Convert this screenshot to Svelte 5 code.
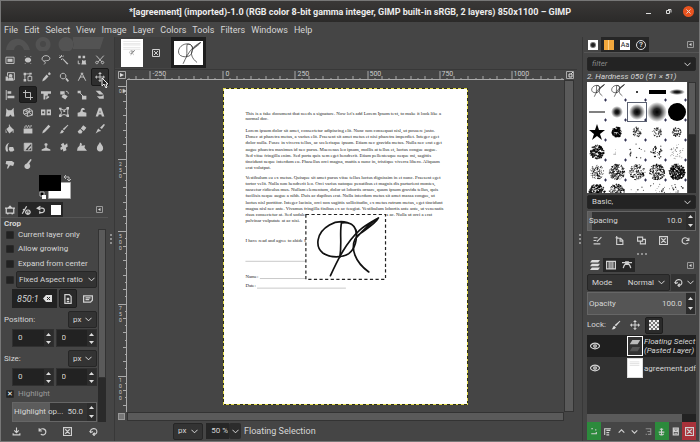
<script lang="ts">
  const title =
    "*[agreement] (imported)-1.0 (RGB color 8-bit gamma integer, GIMP built-in sRGB, 2 layers) 850x1100 – GIMP";
  const menus = ["File", "Edit", "Select", "View", "Image", "Layer", "Colors", "Tools", "Filters", "Windows", "Help"];

  // f = filled path, s = stroked path, on a 16x16 grid
  type Icon = { name: string; f?: string; s?: string };

  const tools: Icon[] = [
    { name: "Rectangle Select", f: "M4 6h8v5H4z", s: "M1.5 3.500h13v10h-13z" },
    { name: "Ellipse Select", f: "M8 4a5 4 0 1 0 .01 0z", s: "M3 3l1-1M12 2l1 1M3 13l1 1M12 14l1-1" },
    { name: "Free Select", s: "M6 10C-1 9 1 1 8 1s9 8 1 8c-3 0-5 1-3 2s0 3-1 4" },
    { name: "Fuzzy Select", f: "M6 5l9 9-2 1-8-9z", s: "M4 0v3M4 6v2M0 4h3M1 1l2 2M7 1L6 3" },
    { name: "Select by Color", f: "M2 1h4v4H2zM9 1h4v4H9zM8 8l3 1 3-1v4l1 3H7l1-3z", s: "M2 9v5h3" },
    { name: "Scissors Select", s: "M2 1l9 10M14 1L5 11M3 10a2 2 0 1 0 .1 0zM12 10a2 2 0 1 0 .1 0z" },
    { name: "Foreground Select", f: "M1 7h4v7H1zM9 3a3 3 0 1 1-.1 0zM5 14c0-4 1-6 4-6s5 2 5 6z", s: "M4 6V1h11v12" },
    { name: "Paths", f: "M1 1h4v4H1zM10 1h4v3h-4zM1 11h4v4H1z", s: "M3 5v6M5 3h5M8 7h6v7H8zM11 4v3" },
    { name: "Color Picker", f: "M11 3l2-3 3 3-3 2zM9 4l3 3-6 6-4 2 1-4z" },
    { name: "Zoom", f: "M10 11l2-2 4 5-2 2z", s: "M6.500 2a4.500 4.500 0 1 0 .1 0z" },
    { name: "Measure", s: "M8 2L2 14M8 2l6 12M4 10c2-3 6-3 8 0M6 2h4" },
    { name: "Move", f: "M8 0l3 3H5zM8 16l3-3H5zM0 8l3-3v6zM16 8l-3-3v6z", s: "M8 2v12M2 8h12" },
    { name: "Align", f: "M4 2h6v4H4zM4 9h11v4H4z", s: "M2 0v16" },
    { name: "Crop", s: "M4 0v12h12M0 4h12v12" },
    { name: "Unified Transform", f: "M0 2h16v4h-5v3H7v6H4V6H0zM9 10h4v2l-5 3z" },
    { name: "Rotate", f: "M2 2h7v5H2zM7 6l7 4-4 5-6-4z", s: "M11 2c3 0 4 2 4 4" },
    { name: "Scale", f: "M1 1h5v4H1zM8 9h7v6H8z", s: "M5 5l5 5" },
    { name: "Shear", f: "M1 1h7l6 6H7zM3 10h7l4-2v6H7z" },
    { name: "Handle Transform", f: "M2 2l3 3h5l4-4v6l1 8h-4l-2-3-3 3H1l1-7z" },
    { name: "3D Transform", s: "M1 5l9-3 5 4v7l-8 2-6-4zM1 5l6 3 8-2M7 8v7M4 4l5 3M10 2v7l-8 2M10 9l5 4" },
    { name: "Flip", f: "M0 4h7v9H0zM9 4h7v9H9zM2 7v3h3V7zM11 7v3h3V7z" },
    { name: "Cage Transform", f: "M0 1h4v3H0zM12 0h4v4h-4zM0 12h4v4H0zM12 12h4v4h-4zM7 5h3v3H7z", s: "M2 3l6 2 6-3v12l-6-2-6 2 2-5z" },
    { name: "Warp Transform", f: "M1 9c2 0 5-1 5-4 1-5 6-4 7-1L9 5c-1 3 3 3 6 4v6H1z" },
    { name: "Text", f: "M6 1h4l5 14h-4l-1-3H6l-1 3H1zM7 9h2L8 5z" },
    { name: "Bucket Fill", f: "M2 8l6-5 6 6-7 6zM1 8v6h2z", s: "M7 1v6M13 9v5" },
    { name: "Gradient", f: "M1 7h14v8H1zM2 4h2v2H2zM6 4h2v2H6zM10 4h2v2h-2zM4 2h2v2H4zM8 2h2v2H8zM12 2h2v2h-2z" },
    { name: "Pencil", f: "M12 1l3 3-9 9-4 2 1-4z" },
    { name: "Paintbrush", f: "M14 1l1 1-7 8-2-2zM5 9l3 3c-2 3-4 3-7 3 2-2 2-5 4-6z" },
    { name: "Eraser", f: "M10 2l5 4-4 5-5-4zM5 8l4 4-2 3H3l-2-3z" },
    { name: "Airbrush", f: "M14 0l2 1-5 7-3-2zM5 7l5 4-4 1-5 3z" },
    { name: "Ink", f: "M2 15C-1 9 1 3 7 1 3 5 4 10 5 15zM7 8h6l2 5-3 2H8l-2-3z" },
    { name: "MyPaint Brush", s: "M2 2h12v12H2z", f: "M2 2h12L8 8l-5 6zM8 11l5-5v3l-4 4z" },
    { name: "Clone", f: "M8 2a2 2 0 0 1 1 4v3l6 3v2H1v-2l6-3V6a2 2 0 0 1 1-4z" },
    { name: "Heal", f: "M3 4l4-3 2 4 4-3 1 5-3 2 1 4-5 2-1-4-3 2-1-4 3-2z" },
    { name: "Perspective Clone", f: "M5 1a3 3 0 0 1 2 5l6-1-1 4 4 5H0l1-5 3-3z" },
    { name: "Blur", f: "M8 0c2 4 5 6 5 10a5 5 0 0 1-10 0c0-4 3-6 5-10z" },
    { name: "Smudge", f: "M2 3h9l4 3-2 5-5-1-3 5H3l2-6-4-1z" },
    { name: "Dodge / Burn", f: "M6 7l1-1 5-6 2 1-4 6c5 7-3 12-7 7-2-3 0-6 3-7z" },
  ];

  const deviceTabs: Icon[] = [
    { name: "Tool Options", s: "M2 5h12v8H2zM0 5h2M14 5h2M5 5l3-3 3 3M4 15l1-2M12 15l-1-2" },
    { name: "Device Status", s: "M2 14L9 2M3 7l3 1M11 8a3.500 3.500 0 1 0 .1 0zM11 10v4" },
    { name: "Undo History", s: "M7 2L2 5l5 3M2 5h8c5 0 4 7 0 7H6M6 10v4" },
  ];

  const saveIcon = "M8 1v8M4 6l4 4 4-4M2 11v3h12v-3";
  const undoIcon = "M2 2v5h5M3 6c3-5 11-3 11 3 0 5-6 6-9 4";
  const resetIcon = "M14 3v5H9M13 7C11 1 2 2 2 9c0 5 8 7 11 3";
  const loopIcon = "M3 9C1 2 14 0 14 8c0 3-3 5-6 5M10 10l-3 3 3 3M1 7l2 3 4-2";
  const boxXIcon = "M1 1h14v14H1zM4 4l8 8M12 4l-8 8";
  const eyeIcon = "M0 8C4 2 12 2 16 8C12 14 4 14 0 8zM8 6a2 2 0 1 0 .1 0z";

  const brushActions: Icon[] = [
    { name: "Edit brush", s: "M1 3h7M1 8h5M1 14h12M15 2L7 10" },
    { name: "New brush", s: "M3 4h7l4 4v7H3zM9 4v5h5M1 3h5M3 0v6" },
    { name: "Duplicate brush", s: "M1 2h9v7H1zM10 6h5v8H6V9" },
    { name: "Delete brush", s: boxXIcon },
    { name: "Refresh brushes", s: resetIcon },
  ];

  const paragraphs = [
    {
      y: 67,
      step: 13,
      lines: [
        "This is a fake document that needs a signature. Now let's add Lorem Ipsum text, to make it look like a",
        "normal doc.",
      ],
    },
    {
      y: 110,
      step: 15.5,
      lines: [
        "Lorem ipsum dolor sit amet, consectetur adipiscing elit. Nunc non consequat nisl, ut posuere justo.",
        "Donec at pharetra metus, a varius elit. Praesent sit amet metus et nisi pharetra imperdiet. Integer eget",
        "dolor nulla. Fusce in viverra tellus, ac scelerisque ipsum. Etiam nec gravida metus. Nulla nec erat eget",
        "augue pharetra maximus id nec purus. Maecenas leo ipsum, mollis at tellus et, luctus congue augue.",
        "Sed vitae fringilla enim. Sed porta quis sem eget hendrerit. Etiam pellentesque neque mi, sagittis",
        "tincidunt neque interdum eu. Phasellus orci magna, mattis a nunc in, tristique viverra libero. Aliquam",
        "erat volutpat.",
      ],
    },
    {
      y: 227,
      step: 15.5,
      lines: [
        "Vestibulum eu ex metus. Quisque sit amet purus vitae tellus luctus dignissim in et nunc. Praesent eget",
        "tortor velit. Nulla non hendrerit leo. Orci varius natoque penatibus et magnis dis parturient montes,",
        "nascetur ridiculus mus. Nullam elementum, dolor ut lobortis ornare, quam ipsum gravida tellus, quis",
        "facilisis neque augue a nibh. Duis ac dapibus erat. Nulla interdum metus sit amet massa congue, ut",
        "luctus nisl porttitor. Integer lacinia, orci non sagittis sollicitudin, ex metus rutrum metus, eget tincidunt",
        "magna nisl nec ante. Vivamus fringilla finibus ex ac feugiat. Vestibulum lobortis ante ante, ut venenatis",
        "risus consectetur at. Sed sodale",
        "pulvinar vulputate at ac nisi.",
      ],
    },
  ];

  // the image is shown at 245px for 850 units, rulers are centred on it
  const SCALE = 245 / 850;
  const units = (from: number, to: number) => Array.from({ length: (to - from) / 25 + 1 }, (_, i) => from + i * 25);
  const hTicks = units(-325, 1175).map((u) => ({ u, at: Math.round((u - 425) * SCALE) }));
  const vTicks = units(0, 1100).map((u) => ({ u, at: Math.round((u - 550) * SCALE) }));
  const tickLength = (u: number) => (u % 250 === 0 ? 9 : u % 50 === 0 ? 4 : 2);

  function speckle(seed: number, count: number, radius: number, size: number) {
    let state = seed * 7919;
    const next = () => (state = (state * 16807) % 2147483647) / 2147483647;
    return Array.from({ length: count }, () => {
      const angle = next() * Math.PI * 2;
      const dist = Math.sqrt(next()) * radius;
      return { x: 10 + Math.cos(angle) * dist, y: 10 + Math.sin(angle) * dist, r: size * (0.5 + next() * 0.5) };
    });
  }

  const brushes = [
    { kind: "signature" },
    { kind: "signature" },
    { kind: "dot" },
    { kind: "block" },
    { kind: "ellipse" },
    { kind: "line" },
    { kind: "soft", r: 6 },
    { kind: "soft", r: 8, selected: true },
    { kind: "soft", r: 10 },
    { kind: "disc" },
    { kind: "star" },
    { kind: "speckle", dots: speckle(3, 110, 5, 1) },
    { kind: "speckle", dots: speckle(4, 60, 5, 0.7) },
    { kind: "speckle", dots: speckle(5, 50, 5, 0.7) },
    { kind: "speckle", dots: speckle(6, 100, 5, 0.6) },
    { kind: "speckle", dots: speckle(7, 130, 7, 1) },
    { kind: "speckle", dots: speckle(8, 4, 4, 0.6) },
    { kind: "speckle", dots: speckle(9, 12, 8, 0.9) },
    { kind: "speckle", dots: speckle(10, 34, 7, 0.9) },
    { kind: "speckle", dots: speckle(11, 36, 8, 0.5) },
    { kind: "speckle", dots: speckle(12, 100, 7, 0.7) },
    { kind: "speckle", dots: speckle(13, 200, 8, 0.7) },
    { kind: "speckle", dots: speckle(14, 150, 8, 0.7) },
    { kind: "speckle", dots: speckle(15, 200, 8, 0.7) },
    { kind: "speckle", dots: speckle(16, 260, 8, 0.9) },
    { kind: "speckle", dots: speckle(17, 190, 8, 0.9) },
    { kind: "speckle", dots: speckle(18, 190, 8, 0.7) },
    { kind: "speckle", dots: speckle(19, 16, 8, 0.6) },
    { kind: "speckle", dots: speckle(20, 34, 9, 0.7) },
    { kind: "speckle", dots: speckle(21, 34, 9, 0.7) },
  ] as any[];

  let activeTool = $state("Crop");
  let currentLayerOnly = $state(false);
  let allowGrowing = $state(false);
  let expandFromCenter = $state(false);
  let highlight = $state(true);
</script>

{#snippet icon(d: string, size = 10)}
  <svg class="icon" width={size} height={size} viewBox="0 0 16 16"><path {d} /></svg>
{/snippet}

{#snippet chevron()}
  <svg class="icon chev" width="7" height="7" viewBox="0 0 16 16"><path d="M1 4l7 7 7-7" /></svg>
{/snippet}

{#snippet arrows()}
  <span class="arrows">
    <button aria-label="Increase"><svg width="5" height="3" viewBox="0 0 5 3"><path d="M0 3L2.500 0 5 3z" /></svg></button>
    <button aria-label="Decrease"><svg width="5" height="3" viewBox="0 0 5 3"><path d="M0 0L2.500 3 5 0z" /></svg></button>
  </span>
{/snippet}

{#snippet signature()}
  <path d="M411 392C416 345 360 340 330 358C288 382 288 425 310 442C332 458 370 456 388 444C408 428 414 400 409 375C404 355 385 348 366 352C360 380 368 415 361 455" />
  <path d="M333 510C355 462 380 410 420 374C440 357 458 348 477 337C450 352 425 380 407 400C394 428 405 468 448 499M477 337C466 358 432 374 412 392" />
{/snippet}

{#snippet panelMenu()}
  <button class="panel-menu" aria-label="Configure this tab">
    <svg width="7" height="7" viewBox="0 0 7 7"><path d="M.5.5h6v6h-6z" fill="none" stroke="#999" /><path d="M2 3.500L4.500 2v3z" fill="#ddd" /></svg>
  </button>
{/snippet}

<div class="window">
  <header class="titlebar">
    <h1>{title}</h1>
    <div class="controls">
      <button aria-label="Minimize"><svg width="7" height="7" viewBox="0 0 7 7"><path d="M1 5.500h5" /></svg></button>
      <button aria-label="Restore"><svg width="7" height="7" viewBox="0 0 7 7"><path d="M1.500 2.500h3v3h-3zM3 1.500h3v3" /></svg></button>
      <button class="close" aria-label="Close"><svg width="7" height="7" viewBox="0 0 7 7"><path d="M1.500 1.500l4 4M5.500 1.500l-4 4" /></svg></button>
    </div>
  </header>

  <nav class="menubar">
    {#each menus as item}
      <button>{item}</button>
    {/each}
  </nav>

  <main>
    <aside class="left">
      <svg class="banner" viewBox="0 0 106 14" height="14">
        <path d="M5 13C7-2 25-2 29 13h-6c-2-7-9-6-10 0zM42 0a7.500 7.500 0 1 0 .1 0zM65 0a7.500 7.500 0 1 0 .1 0zM72 0h31l-4 12H72z" />
        <circle cx="42" cy="7" r="3" />
      </svg>
      <div class="tools">
        {#each tools as tool}
          <button
            class:active={activeTool === tool.name}
            class:hovered={tool.name === "Move"}
            aria-label={tool.name}
            onclick={() => (activeTool = tool.name)}
          >
            <svg width="10" height="10" viewBox="0 0 16 16">
              {#if tool.f}<path d={tool.f} fill="#c4c4c4" fill-rule="evenodd" />{/if}
              {#if tool.s}<path d={tool.s} fill="none" stroke="#c4c4c4" stroke-width="1.500" />{/if}
            </svg>
            {#if tool.name === "Move"}
              <svg class="cursor" width="8" height="12" viewBox="0 0 8 12">
                <path d="M1 1v8l2-2 2 4 1-1-1-3h2z" fill="#222" stroke="#eee" />
              </svg>
            {/if}
          </button>
        {/each}
      </div>
      <svg class="colors" width="34" height="26" viewBox="0 0 34 26">
        <path d="M9.500 8.500h22v16h-22z" fill="#fff" stroke="#aaa" />
        <path d="M0 1h22v16H0z" fill="#000" />
        <path d="M1 18h4v4H1z" fill="#000" stroke="#bbb" />
        <path d="M3 21h4v4H3z" fill="#fff" />
        <path d="M26 3h4v4M27 1l-2 2 2 2M28 5l2 2 2-2" fill="none" stroke="#bbb" />
      </svg>

      <div class="tabs">
        {#each deviceTabs as tab, i}
          <button class:current={i === 0} aria-label={tab.name}>{@render icon(tab.s ?? "")}</button>
        {/each}
        <button aria-label="Images"><span class="thumb-white"></span></button>
        {@render panelMenu()}
      </div>

      <section class="options">
        <h2>Crop</h2>
        <div class="scroller">
          <div class="form">
            <label class="check"><input type="checkbox" bind:checked={currentLayerOnly} />Current layer only</label>
            <label class="check"><input type="checkbox" bind:checked={allowGrowing} />Allow growing</label>
            <label class="check"><input type="checkbox" bind:checked={expandFromCenter} />Expand from center</label>
            <div class="fixed">
              <input type="checkbox" aria-label="Fixed" />
              <div class="select">
                <span>Fixed</span>
                <select aria-label="Fixed"><option>Aspect ratio</option></select>
                {@render chevron()}
              </div>
            </div>
            <div class="ratio">
              <div class="entry">
                <input type="text" value="850:1" aria-label="Ratio" />
                <svg width="9" height="7" viewBox="0 0 9 7"><path d="M3 0h6v7H3L0 3.500z" fill="#ddd" /><path d="M4 2l3 3M7 2L4 5" stroke="#222" /></svg>
              </div>
              <button class="pressed" aria-label="Portrait">{@render icon("M3 1h7l3 3v11H3zM6 7h4M6 9h4M6 12h4")}</button>
              <button aria-label="Landscape">{@render icon("M1 3h14v7l-3 3H1zM4 6h8M4 9h6")}</button>
            </div>
            {#each ["Position", "Size"] as group}
              <div class="unit-row">
                <label for={group}>{group}:</label>
                <div class="select">
                  <select id={group}><option>px</option></select>
                  {@render chevron()}
                </div>
              </div>
              <div class="pair">
                <div class="spin"><input type="text" value="0" aria-label="{group} X" />{@render arrows()}</div>
                <div class="spin"><input type="text" value="0" aria-label="{group} Y" />{@render arrows()}</div>
              </div>
            {/each}
            <label class="check faded"><input type="checkbox" bind:checked={highlight} />Highlight</label>
            <div class="scale half">
              <label for="opacity-hl">Highlight op...</label>
              <input id="opacity-hl" type="text" value="50.0" />
              {@render arrows()}
            </div>
          </div>
          <div class="vbar"><span></span></div>
        </div>
        <div class="actions">
          <button aria-label="Save preset">{@render icon(saveIcon, 9)}</button>
          <button aria-label="Restore preset">{@render icon(undoIcon, 9)}</button>
          <button aria-label="Delete preset">{@render icon(boxXIcon, 9)}</button>
          <button aria-label="Reset">{@render icon(loopIcon, 9)}</button>
        </div>
      </section>
    </aside>

    <div class="grip"><i></i><i></i><i></i></div>

    <section class="image">
      <div class="image-tabs">
        <div class="image-tab">
          <button class="page-thumb" aria-label="Agreement image">
            <svg width="22" height="28" viewBox="223 87 245 318">
              <path d="M246 115h195M246 140h195M246 155h195M246 185h195M246 205h195" stroke="#ddd" stroke-width="8" />
              <g transform="translate(220 105) scale(.33)" fill="none" stroke="#444" stroke-width="10">{@render signature()}</g>
            </svg>
          </button>
          <button class="tab-close" aria-label="Close tab">{@render icon("M1 1h14v14H1zM4 4l8 8M12 4l-8 8", 8)}</button>
        </div>
        <button class="image-tab other" aria-label="Signature image">
          <svg width="29" height="24" viewBox="258 325 239 195" preserveAspectRatio="none">
            <path d="M258 325h239v195H258z" fill="#fff" />
            <g fill="none" stroke="#333" stroke-width="6">{@render signature()}</g>
          </svg>
        </button>
      </div>

      <div class="view">
        <button class="corner" aria-label="Image menu">
          <svg width="8" height="8" viewBox="0 0 8 8"><path d="M.5.5h7v7h-7z" fill="none" stroke="#aaa" /><path d="M2 2l4 2-4 2z" fill="#ddd" /></svg>
        </button>
        <svg class="hruler">
          <svg x="50%" overflow="visible">
            {#each hTicks as { u, at }}
              <path d="M{at}.5 10v-{tickLength(u)}" />
              {#if u % 250 === 0}<text x={at + 2} y="6">{u}</text>{/if}
            {/each}
          </svg>
          <path class="edge" d="M0 9.500h2000" />
        </svg>
        <button class="corner" aria-label="Zoom with window">
          <svg width="8" height="8" viewBox="0 0 8 8"><path d="M.5.5h7v7h-7z" fill="none" stroke="#aaa" /><path d="M3 3h3v3H3zM5 3l2-2" fill="none" stroke="#ddd" /></svg>
        </button>

        <svg class="vruler">
          <svg y="50%" overflow="visible">
            {#each vTicks as { u, at }}
              <path d="M9 {at}.5h-{tickLength(u)}" />
              {#if u % 250 === 0}
                {#each String(u).split("") as digit, i}<text x="1" y={at + 6 + i * 6}>{digit}</text>{/each}
              {/if}
            {/each}
          </svg>
          <path class="edge" d="M8.500 0v2000" />
          <path d="M5 9l3 2-3 2z" fill="#eee" />
        </svg>
        <div class="canvas">
          <svg class="page" width="245" height="317" viewBox="0 0 612 792">
            <path d="M0 0h612v792H0z" fill="#fff" />
            {#each paragraphs as p}
              {#each p.lines as line, i}
                <text x="56" y={p.y + i * p.step}>{line}</text>
              {/each}
            {/each}
            <text x="408" y="320">s ac. Nulla ut orci a erat</text>
            <text x="56" y="384">I have read and agree to abide b</text>
            <path d="M56 433h151M92 476h115M85 500h222" stroke="#777" stroke-width="1" />
            <text x="56" y="475">Name:</text>
            <text x="56" y="498">Date:</text>
            <path d="M207 316h199v162H207z" fill="#fff" stroke="#222" stroke-width="3" stroke-dasharray="8 6" />
            <g transform="translate(-9 44) scale(.833)" fill="none" stroke="#111" stroke-width="5" stroke-linecap="round">
              {@render signature()}
            </g>
            <g fill="none" stroke-width="5" shape-rendering="crispEdges">
              <path d="M0 0h612v792H0z" stroke="#33330e" />
              <path d="M0 0h612v792H0z" stroke="#e2da4c" stroke-dasharray="7 7" />
            </g>
          </svg>
        </div>
        <div class="vscroll"></div>

        <div class="corner"><span class="quickmask"></span></div>
        <div class="hscroll"></div>
        <span></span>
      </div>

      <footer>
        <div class="select"><select aria-label="Unit"><option>px</option></select>{@render chevron()}</div>
        <div class="zoom"><input type="text" value="50 %" aria-label="Zoom" /><button aria-label="Zoom levels">{@render chevron()}</button></div>
        <span>Floating Selection</span>
      </footer>
    </section>

    <div class="grip"><i></i><i></i><i></i></div>

    <aside class="right">
      <div class="tabs">
        <button class="current" aria-label="Brushes">
          <svg width="10" height="10" viewBox="0 0 10 10"><path d="M0 0h10v10H0z" fill="#fff" /><circle cx="5" cy="5" r="3" fill="#777" /><circle cx="5" cy="5" r="2" fill="#222" /></svg>
        </button>
        <button aria-label="Patterns"><svg width="10" height="10" viewBox="0 0 10 10"><path d="M0 0h10v10H0z" fill="#f3a83c" /><path d="M4.500 0v10" stroke="#ffd287" /></svg></button>
        <button aria-label="Fonts"><span class="aa">Aa</span></button>
        <button aria-label="Document History"><span class="help">?</span></button>
        {@render panelMenu()}
      </div>

      <div class="brush-panel">
        <div class="select filter"><input type="text" placeholder="filter" aria-label="Filter" />{@render chevron()}</div>
        <h2>2. Hardness 050 (51 × 51)</h2>
        <div class="brush-area">
          <div class="brush-grid">
            {#each brushes as b}
              <button class:selected={b.selected} aria-label="Brush">
                <svg viewBox="0 0 20 20">
                  {#if b.kind === "signature"}
                    <g transform="translate(-16 -21) scale(.07)" fill="none" stroke="#222" stroke-width="9">{@render signature()}</g>
                  {:else if b.kind === "dot"}
                    <circle cx="10" cy="10" r="1" />
                  {:else if b.kind === "block"}
                    <path d="M2 8h17v4H2z" />
                  {:else if b.kind === "ellipse"}
                    <ellipse cx="10" cy="10" rx="8" ry="3" fill="url(#soft)" />
                  {:else if b.kind === "line"}
                    <path d="M2 9.500h16v1H2z" />
                  {:else if b.kind === "soft"}
                    <circle cx="10" cy="10" r={b.r} fill="url(#soft)" />
                  {:else if b.kind === "disc"}
                    <circle cx="10" cy="10" r="9" />
                  {:else if b.kind === "star"}
                    <path d="M10 2l2 6h6l-5 4 2 6-5-4-5 4 2-6-5-4h6z" />
                  {:else}
                    {#each b.dots as dot}
                      <circle cx={dot.x} cy={dot.y} r={dot.r} fill-opacity=".8" />
                    {/each}
                  {/if}
                  <path d="M17 18h3M18.500 16.500v3" stroke="#335" />
                </svg>
              </button>
            {/each}
          </div>
          <div class="vbar short"><span></span></div>
        </div>
        <div class="select tag"><select aria-label="Tag"><option>Basic,</option></select>{@render chevron()}</div>
        <div class="scale tenth">
          <label for="spacing">Spacing</label>
          <input id="spacing" type="text" value="10.0" />
          {@render arrows()}
        </div>
        <div class="actions">
          {#each brushActions as action}
            <button aria-label={action.name}>{@render icon(action.s ?? "", 9)}</button>
          {/each}
        </div>
      </div>

      <div class="grip row"><i></i><i></i><i></i></div>

      <div class="tabs layer-tabs">
        <button class="current" aria-label="Layers">
          <svg width="10" height="10" viewBox="0 0 16 16"><path d="M3 0h13l-3 4H0zM3 6h13l-3 4H0zM3 12h13l-3 4H0z" fill="#ddd" /></svg>
        </button>
        <button aria-label="Channels">{@render icon("M1 2h14v12H1zM5 3v10M8 3v10M11 3v10")}</button>
        <button aria-label="Paths">{@render icon("M0 4h16M8 5C4 6 3 9 2 13M8 5c4 1 5 4 6 8M6 3h4v4H6z")}</button>
        {@render panelMenu()}
      </div>

      <div class="layer-panel">
        <div class="mode">
          <div class="select">
            <label for="mode">Mode</label>
            <select id="mode"><option>Normal</option></select>
            {@render chevron()}
          </div>
          <button aria-label="Switch mode group">{@render icon(loopIcon, 9)}{@render chevron()}</button>
        </div>
        <div class="scale full">
          <label for="opacity">Opacity</label>
          <input id="opacity" type="text" value="100.0" />
          {@render arrows()}
        </div>
        <div class="lock">
          <span>Lock:</span>
          <button aria-label="Lock pixels"><svg width="10" height="10" viewBox="0 0 16 16"><path d={tools[27].f} fill="#ddd" /></svg></button>
          <button aria-label="Lock position"><svg width="10" height="10" viewBox="0 0 16 16"><path d={tools[11].f} fill="#ddd" /><path d={tools[11].s} stroke="#ddd" stroke-width="1.500" /></svg></button>
          <button class="pressed" aria-label="Lock alpha">
            <svg width="10" height="10" viewBox="0 0 10 10"><path d="M0 0h10v10H0z" fill="#777" /><path d="M0 0h2v2H0zM4 0h2v2H4zM8 0h2v2H8zM2 2h2v2H2zM6 2h2v2H6zM0 4h2v2H0zM4 4h2v2H4zM8 4h2v2H8zM2 6h2v2H2zM6 6h2v2H6zM0 8h2v2H0zM4 8h2v2H4zM8 8h2v2H8z" fill="#eee" /></svg>
          </button>
        </div>
        <div class="layers">
          <div class="layer current">
            {@render icon(eyeIcon, 10)}
            <svg class="layer-thumb dark" width="16" height="20" viewBox="0 0 16 20"><path d="M5 3h9l-3 5H2z" fill="#bbb" /><path d="M5 11h9l-3 5H2z" fill="#555" /></svg>
            <em>Floating Select<br />(Pasted Layer)</em>
          </div>
          <div class="layer">
            {@render icon(eyeIcon, 10)}
            <svg class="layer-thumb" width="16" height="20" viewBox="0 0 16 20"><path d="M2 3h11M2 5h11M2 7h11" stroke="#ddd" /></svg>
            <span>agreement.pdf</span>
          </div>
        </div>
        <div class="hbar"><span></span></div>
        <div class="layer-actions">
          <button class="green" aria-label="New layer">{@render icon("M4 3h3M4 12h9v-3M11 5h2", 9)}</button>
          <button aria-label="New group">{@render icon("M2 3h12M3 3v11M6 6h7M6 10h5M6 14h5", 9)}</button>
          <button aria-label="Raise">{@render icon("M3 10l5-5 5 5", 9)}</button>
          <button aria-label="Lower">{@render icon("M3 6l5 5 5-5", 9)}</button>
          <button class="dim" aria-label="Duplicate">{@render icon("M3 3h9v10H7M6 8h6M3 13h2", 9)}</button>
          <button class="green" aria-label="Anchor">{@render icon("M8 2v12M5 4h6M3 9h10M4 12c2 3 6 3 8 0", 9)}</button>
          <button aria-label="Add mask">{@render icon("M4 2h9v12H4zM6 5h5v3H6zM6 11h5", 9)}</button>
          <button class="red" aria-label="Delete layer">{@render icon(boxXIcon, 9)}</button>
        </div>
      </div>
    </aside>
  </main>

  <svg width="0" height="0" class="defs">
    <defs>
      <radialGradient id="soft">
        <stop offset="0" />
        <stop offset=".35" stop-opacity=".85" />
        <stop offset="1" stop-opacity="0" />
      </radialGradient>
    </defs>
  </svg>
</div>

<style>
  :global(body) {
    background: #454545;
  }
  .window {
    display: flex;
    flex-direction: column;
    min-height: 100vh;
    box-sizing: border-box;
    border: 1px solid #777;
    border-bottom-width: 2px;
    background: #454545;
    color: #d6d6d6;
    font: 8px/12px Roboto, "Noto Sans", sans-serif;
    overflow: hidden;
  }
  .window :global(*) {
    box-sizing: border-box;
  }
  svg {
    display: block;
    flex: none;
  }
  .defs {
    position: absolute;
  }
  button,
  input,
  select {
    font: inherit;
    color: inherit;
    background: none;
    border: 0;
    padding: 0;
    margin: 0;
    min-width: 0;
    border-radius: 0;
    outline: none;
  }
  button {
    display: flex;
    align-items: center;
    justify-content: center;
  }
  select {
    appearance: none;
    flex: 1;
  }
  h1,
  h2 {
    margin: 0;
    font-size: 8px;
  }
  .icon {
    fill: none;
    stroke: #d0d0d0;
    stroke-width: 2;
  }
  .chev {
    stroke: #eee;
    pointer-events: none;
  }

  .titlebar {
    display: flex;
    align-items: center;
    height: 21px;
    padding: 0 5px 0 128px;
    background: linear-gradient(#3a3837, #2b2a29);
  }
  h1 {
    flex: 1;
    font-size: 9px;
    color: #ececec;
    white-space: nowrap;
  }
  .controls {
    display: flex;
    gap: 9px;
  }
  .controls button {
    width: 11px;
    height: 11px;
    border-radius: 50%;
  }
  .controls path {
    fill: none;
    stroke: #ddd;
  }
  .controls .close {
    background: #e95420;
  }
  .menubar {
    display: flex;
    gap: 6px;
    height: 15px;
    padding: 0 3px;
    font-size: 9px;
  }
  main {
    flex: 1;
    display: grid;
    grid-template-columns: 107px 7px 1fr 6px 116px;
  }

  .left,
  .right,
  .image {
    display: flex;
    flex-direction: column;
    min-width: 0;
  }
  .banner {
    width: 106px;
    fill: #535353;
  }
  .banner circle {
    fill: #484848;
  }
  .tools {
    display: grid;
    grid-template-columns: repeat(6, 18px);
    grid-template-rows: repeat(7, 1fr);
    height: 122px;
  }
  .tools button {
    position: relative;
    border-radius: 2px;
  }
  .tools .active,
  .tools .hovered {
    background: #222;
    border: 1px solid #1a1a1a;
  }
  .tools .hovered {
    background: #2e2e2e;
  }
  .cursor {
    position: absolute;
    left: 9px;
    top: 8px;
    z-index: 1;
  }
  .colors {
    margin: 1px 0 2px 38px;
  }

  .tabs {
    display: flex;
    height: 15px;
  }
  .tabs button {
    width: 16px;
    background: #262626;
  }
  .left .tabs button {
    width: 15px;
  }
  .tabs .current,
  .left .tabs .current {
    width: 17px;
    background: #454545;
  }
  .tabs :global(.panel-menu),
  .left .tabs :global(.panel-menu) {
    width: 12px;
    margin-left: auto;
    background: none;
  }
  .thumb-white {
    width: 10px;
    height: 10px;
    background: #fff;
  }
  .options {
    flex: 1;
    display: flex;
    flex-direction: column;
    padding: 0 2px 0 3px;
    border-top: 1px solid #555;
  }
  .options h2 {
    line-height: 11px;
  }
  .scroller {
    flex: 1;
    display: flex;
    justify-content: space-between;
    height: 0;
    overflow: hidden;
  }
  .form {
    width: 93px;
    display: flex;
    flex-direction: column;
  }
  .check {
    display: flex;
    align-items: center;
    gap: 4px;
    height: 15px;
    padding-left: 2px;
    white-space: nowrap;
    flex: none;
  }
  .check:first-child {
    height: 12px;
  }
  .faded {
    color: #999;
    height: 16px;
  }
  input[type="checkbox"] {
    appearance: none;
    flex: none;
    width: 8px;
    height: 8px;
    background: #222;
    border: 1px solid #2a2a2a;
    border-radius: 1px;
    display: grid;
    place-items: center;
  }
  input[type="checkbox"]:checked::before {
    content: "✕";
    font: bold 7px/6px "DejaVu Sans", sans-serif;
    color: #fff;
  }
  .fixed {
    display: flex;
    align-items: center;
    gap: 2px;
    padding-left: 2px;
    flex: none;
  }
  .select {
    display: flex;
    align-items: center;
    gap: 3px;
    height: 17px;
    padding: 0 4px;
    background: #333;
    border: 1px solid #262626;
    border-radius: 2px;
    min-width: 0;
  }
  .fixed .select {
    flex: 1;
    gap: 2px;
    padding: 0 1px 0 2px;
  }
  .ratio {
    display: flex;
    gap: 2px;
    height: 20px;
    padding: 1px 0 0 8px;
    flex: none;
  }
  .ratio .entry {
    flex: 1;
    display: flex;
    align-items: center;
    padding: 0 5px;
    background: #222;
    min-width: 0;
  }
  .entry input {
    width: 100%;
    font-size: 9px;
    font-style: italic;
  }
  .ratio button {
    width: 18px;
  }
  .pressed {
    background: #2a2a2a;
    border: 1px solid #1e1e1e;
    border-radius: 2px;
  }
  .unit-row {
    display: flex;
    justify-content: space-between;
    align-items: center;
    height: 21px;
    padding-top: 2px;
    flex: none;
  }
  .unit-row .select {
    width: 29px;
  }
  .pair {
    display: flex;
    gap: 2px;
    height: 18px;
    padding-left: 8px;
    flex: none;
  }
  .spin {
    flex: 1;
    display: flex;
    align-items: center;
    padding-left: 5px;
    background: #222;
    border: 1px solid #303030;
    min-width: 0;
  }
  .spin input {
    width: 100%;
  }
  .arrows {
    display: flex;
    flex-direction: column;
    align-self: stretch;
    width: 9px;
    flex: none;
    background: #2c2c2c;
  }
  .arrows button {
    flex: 1;
  }
  .arrows path {
    fill: #ddd;
  }
  .scale {
    display: flex;
    align-items: center;
    height: 20px;
    padding-left: 1px;
    border: 1px solid #666;
    flex: none;
    white-space: nowrap;
  }
  .scale input {
    flex: 1;
    width: 20px;
    text-align: right;
    padding-right: 4px;
  }
  .half {
    margin-left: 8px;
    background: linear-gradient(90deg, #5c5c5c 45%, #333 45%);
  }
  .tenth {
    background: linear-gradient(90deg, #5c5c5c 4%, #333 4%);
  }
  .full {
    background: #555;
  }
  .vbar {
    width: 8px;
    background: #2a2a2a;
  }
  .vbar span {
    display: block;
    height: 77%;
    background: #5a5a5a;
    border: 1px solid #333;
  }
  .vbar.short span {
    height: 48%;
  }
  .actions {
    display: flex;
    justify-content: space-around;
    align-items: center;
    height: 19px;
  }

  .grip {
    display: flex;
    flex-direction: column;
    align-items: center;
    justify-content: center;
    gap: 2px;
    border-right: 1px solid #383838;
  }
  .grip i {
    width: 2px;
    height: 2px;
    background: #aaa;
    border-radius: 50%;
  }
  .grip.row {
    flex-direction: row;
    border: 0;
    height: 7px;
  }

  .image-tabs {
    display: flex;
    height: 33px;
    padding-bottom: 1px;
    border-bottom: 1px solid #383838;
  }
  .image-tab {
    display: flex;
    align-items: center;
    gap: 9px;
    width: 56px;
    padding-left: 6px;
    background: #3e3e3e;
  }
  .page-thumb {
    background: #fff;
  }
  .other {
    width: 35px;
    padding: 0;
    background: #1e1e1e;
  }
  .view {
    flex: 1;
    display: grid;
    grid-template-columns: 11px 1fr 11px;
    grid-template-rows: 10px 1fr 9px;
    padding: 0 2px 0 1px;
  }
  .corner {
    display: grid;
    place-items: center;
  }
  .hruler {
    width: 100%;
    height: 10px;
  }
  .vruler {
    width: 9px;
    height: 100%;
    justify-self: end;
  }
  .hruler path,
  .vruler path {
    stroke: #aaa;
  }
  .hruler text,
  .vruler text {
    font-size: 5px;
    fill: #ccc;
  }
  .hruler text {
    font-size: 7px;
  }
  .canvas {
    display: grid;
    place-items: center;
    min-width: 0;
  }
  .page text {
    font: 12px "Liberation Serif", serif;
    fill: #222;
  }
  .vscroll,
  .hscroll {
    background: #5a5a5a;
    border: 1px solid #333;
  }
  .vscroll {
    margin: 0 1px 0 0;
  }
  .quickmask {
    width: 7px;
    height: 7px;
    background: #777;
    border: 1px solid #999;
  }
  footer {
    display: flex;
    align-items: center;
    gap: 3px;
    height: 20px;
    padding-left: 58px;
    font-size: 9px;
  }
  footer .select {
    width: 30px;
    font-size: 8px;
  }
  .zoom {
    display: flex;
    font-size: 8px;
  }
  .zoom input {
    width: 23px;
    padding-right: 1px;
    text-align: right;
    background: #262626;
  }
  .zoom button {
    width: 12px;
    height: 16px;
    background: #2c2c2c;
    border-radius: 2px;
  }

  .right {
    padding: 0 0 0 1px;
  }
  .aa {
    width: 10px;
    color: #222;
    background: #fff;
    font-size: 7px;
    line-height: 10px;
  }
  .help {
    width: 10px;
    font-weight: bold;
    line-height: 8px;
    border: 1px solid #ddd;
    border-radius: 50%;
  }
  .tabs,
  .brush-panel,
  .layer-panel {
    padding-right: 3px;
  }
  .brush-panel,
  .layer-panel {
    display: flex;
    flex-direction: column;
    min-width: 0;
    padding-left: 3px;
  }
  .brush-panel {
    padding-top: 4px;
    border-top: 1px solid #555;
  }
  .filter,
  .tag {
    height: 14px;
    background: #232323;
  }
  .filter input {
    flex: 1;
    font-style: italic;
  }
  .filter input::placeholder {
    color: #888;
  }
  .brush-panel h2 {
    font-weight: normal;
    font-style: italic;
    line-height: 11px;
    white-space: nowrap;
  }
  .brush-area {
    display: flex;
    height: 111px;
    margin-bottom: 2px;
    gap: 1px;
  }
  .brush-grid {
    flex: 1;
    display: grid;
    grid-template-columns: repeat(5, 1fr);
    align-content: start;
    background: #fff;
    overflow: hidden;
  }
  .brush-grid button {
    width: 100%;
  }
  .brush-grid svg {
    width: 100%;
  }
  .brush-grid .selected {
    outline: 1px solid #5a6070;
    outline-offset: -1px;
  }
  .tag {
    margin-bottom: 2px;
  }

  .layer-tabs {
    padding-left: 2px;
    height: 14px;
    margin: 1px 0 2px;
  }
  .layer-panel {
    flex: 1;
  }
  .mode {
    display: flex;
    gap: 1px;
    margin-bottom: 1px;
  }
  .mode .select {
    flex: 1;
    gap: 4px;
  }
  .mode select {
    text-align: right;
    text-align-last: right;
  }
  .mode button {
    width: 25px;
    gap: 4px;
    background: #333;
  }
  .layer-panel .scale {
    height: 23px;
  }
  .lock {
    display: flex;
    align-items: center;
    height: 20px;
    gap: 1px;
  }
  .lock button {
    width: 18px;
    height: 17px;
  }
  .layers {
    flex: 1;
    background: #323232;
    overflow: hidden;
  }
  .layer {
    display: flex;
    align-items: center;
    height: 22px;
    padding-left: 3px;
    white-space: nowrap;
    line-height: 9px;
  }
  .layer.current {
    background: #1f1f1f;
  }
  .layer-thumb {
    margin: 0 1px 0 27px;
    background: #fff;
    border: 1px solid #ddd;
  }
  .layer-thumb.dark {
    background: #333;
    border-color: #fff;
  }
  .hbar {
    height: 8px;
    background: #222;
  }
  .hbar span {
    display: block;
    width: 87%;
    height: 100%;
    background: #5a5a5a;
  }
  .layer-actions {
    display: flex;
    height: 19px;
    padding-bottom: 1px;
  }
  .layer-actions button {
    flex: 1;
  }
  .layer-actions .green {
    background: #2c8a3c;
  }
  .layer-actions .red {
    background: #a8323a;
  }
  .dim {
    opacity: 0.5;
  }
</style>
